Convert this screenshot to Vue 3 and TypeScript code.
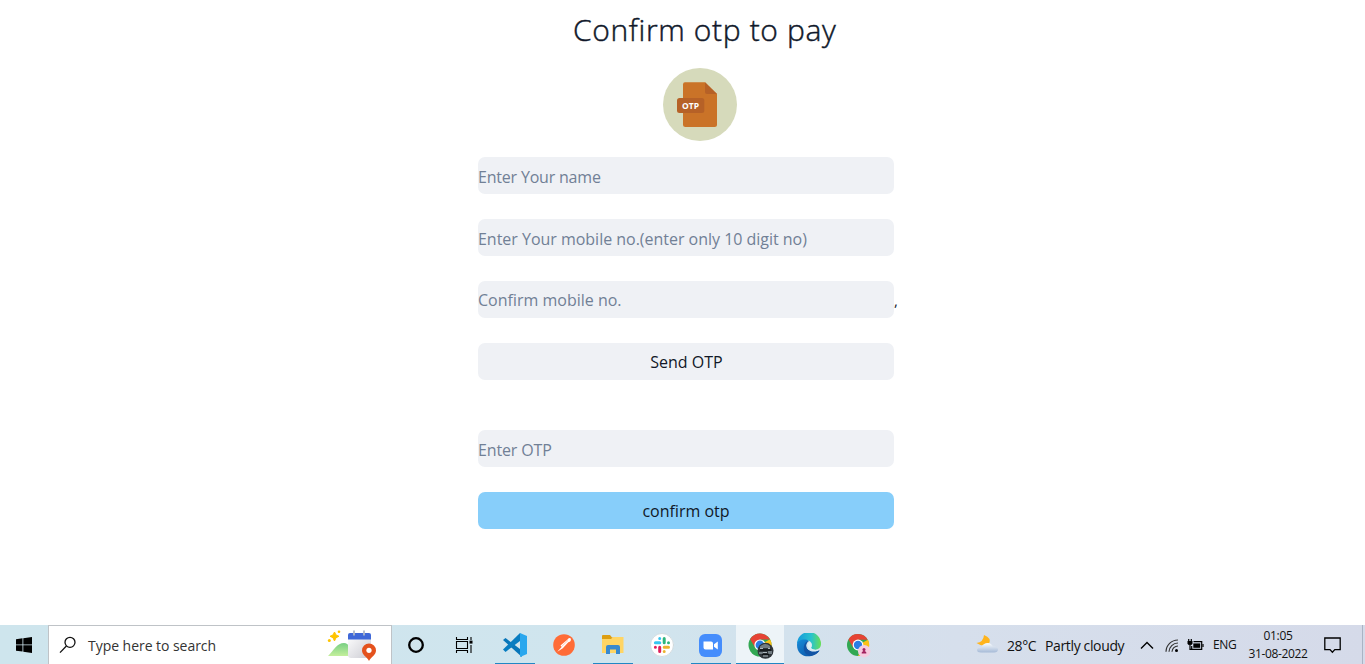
<script setup lang="ts">
import { ref } from 'vue'

interface Field {
  id: string
  placeholder: string
  suffix?: string
}

const fields: Field[] = [
  { id: 'name', placeholder: 'Enter Your name' },
  { id: 'mobile', placeholder: 'Enter Your mobile no.(enter only 10 digit no)' },
  { id: 'repeat', placeholder: 'Confirm mobile no.', suffix: ',' },
]

const values = ref<Record<string, string>>({ name: '', mobile: '', repeat: '' })
const otp = ref('')
</script>

<template>
  <div class="screen">
    <main class="page">
      <h1><span>Confirm otp to pay</span></h1>
      <svg class="badge" width="74" height="74" viewBox="0 0 74 74">
        <ellipse cx="37" cy="36.5" rx="37" ry="36.5" fill="#d6dabb" />
        <path d="M22 14.2H42L54 26V56.5Q54 59 51.5 59H22.5Q20 59 20 56.5V16.5Q20 14.2 22 14.2Z" fill="#ca7328" />
        <path d="M42 14.2L54 26H44Q42 26 42 24Z" fill="#b66127" />
        <rect x="14" y="30" width="27.3" height="15" rx="2.5" fill="#b66127" />
        <text x="19" y="40.6" textLength="17" lengthAdjust="spacingAndGlyphs" class="badge-text">OTP</text>
      </svg>
      <form class="form" @submit.prevent>
        <div v-for="f in fields" :key="f.id" class="row">
          <input v-model="values[f.id]" :class="f.id" :placeholder="f.placeholder" />
          <span v-if="f.suffix" class="suffix">{{ f.suffix }}</span>
        </div>
        <button type="button" class="send">Send OTP</button>
        <input v-model="otp" class="otp" placeholder="Enter OTP" />
        <button type="button" class="confirm">confirm otp</button>
      </form>
    </main>

    <footer class="taskbar">
      <div class="start">
        <svg width="16" height="16" viewBox="0 0 16 16"><path d="M0 2.3L6.5 1.3V7.5H0ZM7.3 1.2L16 0V7.5H7.3ZM0 8.3H6.5V14.6L0 13.7ZM7.3 8.3H16V16L7.3 14.8Z" /></svg>
      </div>
      <div class="search">
        <svg class="lens" width="18" height="18" viewBox="0 0 18 18" fill="none" stroke="#111" stroke-width="1.3"><circle cx="11" cy="6.3" r="5" /><path d="M7.4 10L1 16.6" /></svg>
        <span class="search-label">Type here to search</span>
        <svg class="art" width="50" height="32" viewBox="0 0 50 32">
          <defs>
            <linearGradient id="hill" x1="0" y1="0" x2="0" y2="1"><stop stop-color="#78cf83" /><stop offset="1" stop-color="#c4ef9c" /></linearGradient>
            <linearGradient id="calendar" x1="0" y1="0" x2="1" y2="1"><stop stop-color="#fff" /><stop offset="1" stop-color="#cbcbd2" /></linearGradient>
          </defs>
          <path d="M1 26C7 20 10 13 17 13C22 13 23 18 26 26Z" fill="url(#hill)" />
          <rect x="21" y="4" width="23" height="24" rx="3" fill="url(#calendar)" />
          <path d="M21 9.5V5Q21 3 23 3H42Q44 3 44 5V9.5Z" fill="#3f68d8" />
          <path d="M27 .5V5.5M37 .5V5.5" stroke="#afb9c9" stroke-width="1.8" />
          <path d="M7.5 2L9 5L12 6.3L9 7.7L7.5 11L6 7.7L3 6.3L6 5Z" fill="#ffc400" stroke="#ffc400" stroke-linejoin="round" />
          <circle cx="12" cy="1.8" r="1.3" fill="#ffc400" /><circle cx="2.3" cy="10.5" r="1.5" fill="#ffc400" />
          <path d="M42 31C40 27 35 25 35 20.5A7 7 0 0 1 49 20.5C49 25 44 27 42 31Z" fill="#e4521d" />
          <circle cx="42" cy="20.3" r="2.6" fill="#fff" />
        </svg>
      </div>
      <div class="slot system">
        <svg width="18" height="18" viewBox="0 0 18 18"><circle cx="9" cy="9" r="6.8" fill="none" stroke="#000" stroke-width="2.3" /></svg>
      </div>
      <div class="slot system">
        <svg width="18" height="18" viewBox="0 0 18 18" fill="none" stroke="#000" stroke-width="1.1"><path d="M1.5 1V3.5H12.5V1M1.5 17V14.5H12.5V17M1.5 5.5H12.5V12.5H1.5ZM16 1V4M16 9V17" /><path d="M14.5 4.6H17.5V7.6H14.5Z" fill="#000" stroke="none" /></svg>
      </div>

      <nav class="apps">
        <div class="slot running">
          <svg width="26" height="26" viewBox="0 0 26 26">
            <path d="M1 8L3.5 6L20 18.5V25Z" fill="#0876b9" />
            <path d="M1 17.5L18 1L20 7.5L3.5 20Z" fill="#087dc1" />
            <path d="M18 1L25 4V22L18 25Z" fill="#2aa7ee" />
          </svg>
        </div>
        <div class="slot">
          <svg width="22" height="22" viewBox="0 0 22 22"><circle cx="11" cy="11" r="10.8" fill="#ff6c37" /><path d="M17.6 4.2Q15.5 3.3 14.3 5.7L7.5 11.5L8.6 13L4.3 17.7L9.8 14.2L15.3 8.3Q18.8 7.5 17.6 4.2Z" fill="#fff" /><path d="M8 13L15 6.5" stroke="#ffb49b" stroke-width=".7" /></svg>
        </div>
        <div class="slot running">
          <svg width="22" height="20" viewBox="0 0 22 20"><path d="M0 1Q0 0 1 0H8L10 2.5H21V6H0Z" fill="#dd9e12" /><path d="M0 4H9L11 2H21.5V18H0Z" fill="#ffd564" /><path d="M4 19V12Q4 10 6 10H16Q18 10 18 12V19H14V14.5H8V19Z" fill="#3889ce" /></svg>
        </div>
        <div class="slot">
          <svg width="24" height="24" viewBox="0 0 24 24" fill="none" stroke-width="3" stroke-linecap="round"><circle cx="12" cy="12" r="11.5" fill="#fff" stroke="#cdd5d9" stroke-width=".8" /><path d="M5.4 9.7H9.8M9.7 5.4V5.5" stroke="#36c5f0" /><path d="M14.2 5.4V9.7M18.5 9.7V9.8" stroke="#2eb67d" /><path d="M14.2 14.2H18.5M14.2 18.5V18.6" stroke="#ecb22e" /><path d="M9.7 14.2V18.5M5.4 14.2V14.3" stroke="#e01e5a" /></svg>
        </div>
        <div class="slot running">
          <svg width="23" height="23" viewBox="0 0 23 23"><rect width="23" height="23" rx="6" fill="#458dfc" /><path d="M4.5 7.5H12Q14 7.5 14 9.5V15.5H6.5Q4.5 15.5 4.5 13.5ZM15 10.2L18.8 7.5V15.5L15 12.8Z" fill="#fff" /></svg>
        </div>
        <div class="slot active">
          <svg width="28" height="28" viewBox="0 0 28 28">
            <circle cx="13" cy="13" r="11.5" fill="#32a853" />
            <path d="M13 13L23 7.2A11.5 11.5 0 0 1 13 24.5L18 15Z" fill="#fbc116" />
            <path d="M3.1 7.2L8.2 15.8L13 7.5H23A11.5 11.5 0 0 0 3.1 7.2Z" fill="#e64335" />
            <circle cx="13" cy="13" r="5.6" fill="#fff" /><circle cx="13" cy="13" r="4.4" fill="#2b7de4" />
            <circle cx="18.5" cy="18.8" r="8" fill="#30353a" /><path d="M13 14.5Q18 10 23 14V16H13ZM12 20H16V22H12ZM21 19H25V22H21Z" fill="#737d83" /><path d="M13 18H24M15 22.5H22" stroke="#101417" stroke-width="1.5" /><path d="M13 16.5H16M21 16.5H23M16 20.5H20M16 24H21" stroke="#aeb8be" />
          </svg>
        </div>
        <div class="slot">
          <svg width="24" height="24" viewBox="0 0 24 24">
            <defs><linearGradient id="edge-top"><stop stop-color="#1599dc" /><stop offset=".6" stop-color="#29c3cd" /><stop offset="1" stop-color="#68df55" /></linearGradient><linearGradient id="edge-low" x1="0" y1="0" x2="1" y2="1"><stop stop-color="#168bd8" /><stop offset="1" stop-color="#0c4da0" /></linearGradient></defs>
            <path d="M0 11A12 12 0 0 1 24 11C24 17 17 18 14 15C18 8 8 4 0 11Z" fill="url(#edge-top)" />
            <path d="M0 12C0 7 8 5 12 8C8 10 8 16 13 18C17 20 21 18 22.5 17.5C17 26 0 26 0 12Z" fill="url(#edge-low)" />
            <path d="M12 8C8 10 8 16 13 18C17 20 21 18 22.5 17.5C17 26 5 23 7 13C7.6 10 9.5 8.4 12 8Z" fill="#1254a4" />
            <path d="M12.2 9C9.5 12 11 17 17 17.8Q20.5 18 22.5 16.2Q17.5 18 14.2 15.5Q13.8 14.8 14.4 14Q15.6 10.5 12.2 9Z" fill="#dceff5" />
          </svg>
        </div>
        <div class="slot last">
          <svg width="28" height="28" viewBox="0 0 28 28">
            <circle cx="13" cy="13" r="11" fill="#32a853" />
            <path d="M13 13L23 7.8A11 11 0 0 1 13 24L18 15Z" fill="#fbc116" />
            <path d="M3.5 7.5L8.2 15.8L13 7.8H22.7A11 11 0 0 0 3.5 7.5Z" fill="#e64335" />
            <circle cx="13" cy="13" r="5.4" fill="#fff" /><circle cx="13" cy="13" r="4.2" fill="#2b7de4" />
            <circle cx="19.2" cy="19.2" r="6.2" fill="#f6cce0" /><circle cx="19" cy="17.4" r="1.5" fill="#a2235f" /><path d="M16.7 21.5V20.5Q17 19.5 18.2 19.3L18.5 18.5H19.5L19.8 19.3Q21.3 19.5 21.3 20.5V21.5Z" fill="#a2235f" />
          </svg>
        </div>
      </nav>

      <div class="tray">
        <svg class="weather" width="23" height="20" viewBox="0 0 23 20"><defs><linearGradient id="cloud" x1="0" y1="0" x2="0" y2="1"><stop stop-color="#fafdff" /><stop offset="1" stop-color="#a6bad7" /></linearGradient></defs><path d="M8 1Q16 4 13 10Q8 14 .5 9Q7.5 8 8 1Z" fill="#ffb41d" /><path d="M5 18.5Q1 18.5 1 16Q1 13.5 5 13.5Q7 9 12 9Q15 9 17 12.5Q22 12.5 22 15.5Q22 18.5 18 18.5Z" fill="url(#cloud)" /></svg>
        <span class="temp">28°C</span><span class="sky">Partly cloudy</span>
        <svg class="caret" width="14" height="9" viewBox="0 0 14 9" fill="none" stroke="#000" stroke-width="1.4"><path d="M1 7.5L7 1.5L13 7.5" /></svg>
        <svg class="wifi" width="14" height="14" viewBox="0 0 14 14" fill="none" stroke="#333" stroke-width="1.2"><path d="M1 12.8A12 12 0 0 1 13 1M4 12.8A9 9 0 0 1 13 4M7 12.8A6 6 0 0 1 13 7" /><circle cx="11.5" cy="11.5" r="1.5" fill="#000" stroke="none" /></svg>
        <svg class="battery" width="17" height="12" viewBox="0 0 17 12" fill="none" stroke="#000" stroke-width="1.2"><path d="M1.7 0V2M4.3 0V2M3 6V10.4H5M6.5 2.7H14.7V10.4H4.7V7" /><path d="M.5 2H5.5V4.5Q5.5 6 3 6T.5 4.5Z" fill="#000" stroke="none" /><path d="M6.3 4.4H13.2V8.8H6.3Z" fill="#000" stroke="none" /><path d="M16 5V8" /></svg>
        <span class="lang">ENG</span>
        <div class="clock"><span class="time">01:05</span><span class="date">31-08-2022</span></div>
        <svg class="notice" width="17" height="17" viewBox="0 0 17 17" fill="none" stroke="#000" stroke-width="1.3"><path d="M.8 1H16.2V12.6H10.8L8.4 15.3L6 12.6H.8Z" /></svg>
        <i class="peek" />
      </div>
    </footer>
  </div>
</template>

<style>
body { margin: 0; overflow: hidden; }
</style>

<style scoped>
* { box-sizing: border-box; }
.screen { display: flex; flex-direction: column; width: 1365px; height: 664px; background: #fff; font-family: "Open Sans", "Noto Sans", sans-serif; color: #1a202c; overflow: hidden; }
.page { flex: 1; min-height: 0; }
h1 { margin: 0; width: 1365px; height: 68px; padding: 7px 0 0 573px; font-size: 30px; line-height: 46px; font-weight: 300; letter-spacing: .64px; white-space: nowrap; color: #10182a; -webkit-text-stroke: .45px #10182a; }
.badge { display: block; margin-left: 663px; }
.badge-text { font: 700 8px "Open Sans", sans-serif; fill: #fff; }
.form { display: flex; flex-direction: column; width: 416px; margin: 15px 0 0 478px; }
.row { display: flex; height: 37px; margin-bottom: 25px; }
input, button { display: block; flex: 0 0 auto; width: 416px; height: 37px; border: 0; border-radius: 7px; background: #eff1f5; outline: 0; font: 400 16px "Open Sans", sans-serif; color: #111827; }
input { padding: 3px 0 0; }
input::placeholder { color: #718096; opacity: 1; }
.name { letter-spacing: -.2px; }
.mobile { letter-spacing: -.02px; }
.repeat { padding-top: 1px; letter-spacing: 0; }
.suffix { font-size: 15px; line-height: 38px; }
.otp { margin: 50px 0 25px; letter-spacing: -.15px; }
.send { padding: 0 0 0 1px; }
.confirm { padding: 0; background: #87cefa; letter-spacing: 0; }

.taskbar { display: flex; flex: 0 0 39px; height: 39px; background: linear-gradient(90deg, #cee5ed 0, #d0e5ee 45%, #d6dfec 70%, #d5dae9 100%); color: #111; font-size: 14px; }
.start { display: flex; align-items: center; justify-content: center; width: 48px; padding-top: 0; }
.search { display: flex; align-items: center; width: 344px; border: solid #bfc3c7; border-width: 1px 1px 0; background: #fff; }
.lens { margin: 0 0 0 10px; }
.search-label { width: 239px; margin-left: 11px; padding-top: 1px; white-space: nowrap; color: #333; letter-spacing: -.04px; }
.art { margin-top: 1px; }
.slot { position: relative; display: flex; flex: 0 0 49px; height: 39px; align-items: center; justify-content: center; padding-top: 1px; }
.system { flex-basis: 48px; }
.apps { display: flex; margin-left: 2px; }
.running::after, .active::after { position: absolute; content: ""; left: 5px; right: 4px; bottom: 0; height: 1.5px; background: #2187c4; }
.active { flex-basis: 48px; margin-left: 1px; padding-left: 2px; padding-top: 2px; background: #edf4f8; }
.active::after { left: 0; right: 0; }
.last { padding-left: 2px; padding-top: 2px; }
.tray { display: flex; align-items: center; flex: 1; margin-left: 94px; padding-top: 2px; white-space: nowrap; }
.weather { flex: none; margin-top: -4px; }
.temp { width: 38px; margin-left: 8px; letter-spacing: -.4px; }
.sky { width: 95px; letter-spacing: -.36px; }
.caret { flex: none; }
.wifi { flex: none; margin: 0 0 0 11px; }
.battery { flex: none; margin-left: 8px; margin-top: -2px; }
.lang { width: 30px; margin-left: 9px; margin-top: -2px; font-size: 12px; letter-spacing: -.3px; }
.clock { display: flex; flex-direction: column; align-items: center; width: 64px; margin: -2px 0 0 3px; font-size: 12px; line-height: 18px; letter-spacing: -.35px; }
.notice { flex: none; margin-left: 14px; }
.peek { width: 1px; height: 39px; margin: -2px 2px 0 auto; background: #aab4c4; }
</style>
